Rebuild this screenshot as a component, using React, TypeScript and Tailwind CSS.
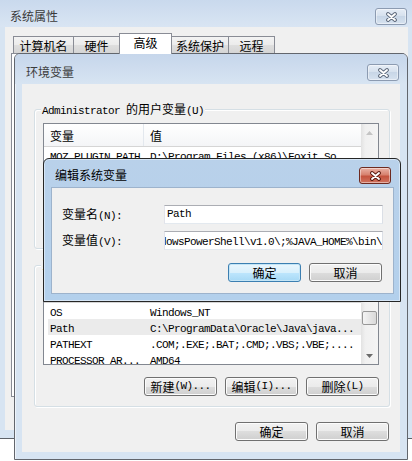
import React from "react";

const cjk = "font-['Noto_Sans_CJK_SC','Noto_Sans',sans-serif]";
const mono =
  "font-['Liberation_Mono','Noto_Sans_CJK_SC',monospace] text-[11px] tracking-[-0.6px]";

// latin run in the dialog's fixed-width font
const M = ({ children }: { children: React.ReactNode }) => (
  <span className={mono}>{children}</span>
);

const CloseBtn = ({ active }: { active?: boolean }) => (
  <div
    className={`flex h-[17px] w-[32px] shrink-0 items-center justify-center rounded-[3px] border shadow-[inset_0_0_0_1px_rgba(255,255,255,0.45)] ${
      active
        ? "border-[#6e2a20] bg-[linear-gradient(#eab2a6,#d7826f_45%,#c4533e_55%,#d0735f)]"
        : "border-[#8c9bb1] bg-[linear-gradient(#e6edf6,#d5e0ed_50%,#c8d6e7_50%,#d6e2ef)]"
    }`}
  >
    <svg width="13" height="10" viewBox="0 0 13 10">
      <path
        d="M3 2 L10 8 M10 2 L3 8"
        stroke={active ? "#5a1a10" : "#5f6b7d"}
        strokeWidth="3.8"
        strokeLinecap="round"
        fill="none"
      />
      <path d="M3 2 L10 8 M10 2 L3 8" stroke="#fff" strokeWidth="1.9" strokeLinecap="round" fill="none" />
    </svg>
  </div>
);

const Btn = ({ children, primary }: { children: React.ReactNode; primary?: boolean }) => (
  <div
    className={`flex h-[19px] w-[73px] shrink-0 items-center justify-center rounded-[3px] border leading-none text-black ${
      primary
        ? "border-[#3c7fb1] bg-[linear-gradient(#eaf6fd,#d9f0fc_50%,#bee6fd_50%,#a7d9f5)] shadow-[inset_0_0_0_1px_#c4e5f6]"
        : "border-[#707070] bg-[linear-gradient(#f2f2f2,#ebebeb_50%,#dddddd_50%,#cfcfcf)] shadow-[inset_0_0_0_1px_#fcfcfc]"
    }`}
  >
    {children}
  </div>
);

const Arrow = ({ up, disabled }: { up?: boolean; disabled?: boolean }) => (
  <div className="flex h-[17px] shrink-0 items-center justify-center">
    <svg width="7" height="4" viewBox="0 0 7 4">
      <path d={up ? "M0 4 L3.5 0 L7 4Z" : "M0 0 L7 0 L3.5 4Z"} fill={disabled ? "#c4c4c4" : "#6a6a6a"} />
    </svg>
  </div>
);

type Row = [string, string];

const ListView = ({ rows, selected, scroll }: { rows: Row[]; selected?: number; scroll?: boolean }) => (
  <div className="flex h-[86px] w-[336px] shrink-0 overflow-hidden border border-[#828790] bg-white">
    <div className="flex w-[317px] flex-col overflow-hidden">
      <div className="flex h-[23px] shrink-0 items-center border-b border-[#d5d5d5] bg-[linear-gradient(#ffffff,#f4f5f7)]">
        <div className="flex h-full w-[100px] items-center border-r border-[#e3e8ee] pl-[6px] pt-[2px]">变量</div>
        <div className="pl-[6px] pt-[2px]">值</div>
      </div>
      {rows.map(([name, value], i) => (
        <div
          key={name}
          className={`ml-[4px] flex h-[16px] shrink-0 items-center whitespace-nowrap pt-[1px] ${
            i === selected ? "bg-[#ebebeb]" : ""
          }`}
        >
          <div className="w-[95px] shrink-0 overflow-hidden pl-[2px]">
            <M>{name}</M>
          </div>
          <div className="pl-[7px]">
            <M>{value}</M>
          </div>
        </div>
      ))}
    </div>
    <div className="flex w-[17px] shrink-0 flex-col bg-[linear-gradient(90deg,#e2e2e2,#f0f0f0_25%,#f4f4f4)]">
      <Arrow up disabled={!scroll} />
      <div className="flex-1">
        {scroll && (
          <div className="ml-px mt-[14px] h-[14px] w-[15px] rounded-[2px] border border-[#979797] bg-[linear-gradient(90deg,#f4f4f4,#e6e6e6_50%,#d9d9d9)]" />
        )}
      </div>
      <Arrow disabled={!scroll} />
    </div>
  </div>
);

const GroupBox = ({
  label,
  className,
  children,
}: {
  label: React.ReactNode;
  className: string;
  children: React.ReactNode;
}) => (
  <div
    className={`relative w-[356px] shrink-0 rounded-[3px] border border-[#d5dfe5] shadow-[inset_1px_1px_0_#fff,1px_1px_0_#fff] ${className}`}
  >
    <span className="absolute left-[6px] top-[-8px] bg-[#f0f0f0] px-px leading-[14px]">{label}</span>
    <div className="ml-[8px] mt-[13px] flex flex-col">{children}</div>
  </div>
);

const ListButtons = () => (
  <div className="mt-[12px] flex w-[336px] justify-end gap-[8px]">
    <Btn>
      新建<M>(W)...</M>
    </Btn>
    <Btn>
      编辑<M>(I)...</M>
    </Btn>
    <Btn>
      删除<M>(L)</M>
    </Btn>
  </div>
);

const userVars: Row[] = [
  ["MOZ_PLUGIN_PATH", "D:\\Program Files (x86)\\Foxit So..."],
  ["TEMP", "%USERPROFILE%\\AppData\\Local\\Temp"],
  ["TMP", "%USERPROFILE%\\AppData\\Local\\Temp"],
];

const sysVars: Row[] = [
  ["OS", "Windows_NT"],
  ["Path", "C:\\ProgramData\\Oracle\\Java\\java..."],
  ["PATHEXT", ".COM;.EXE;.BAT;.CMD;.VBS;.VBE;...."],
  ["PROCESSOR_AR...", "AMD64"],
];

const tabs = [
  { label: "计算机名", w: "w-[61px]" },
  { label: "硬件", w: "w-[47px]" },
  { label: "高级", w: "w-[53px]", active: true },
  { label: "系统保护", w: "w-[58px]" },
  { label: "远程", w: "w-[47px]" },
];

const inputBox =
  "flex h-[19px] w-[219px] items-center overflow-hidden whitespace-nowrap border border-[#abadb3] border-b-[#e3e9ef] border-l-[#e2e3ea] border-r-[#dbdfe6] bg-white";

export default function App() {
  return (
    <div className={`relative h-[461px] w-[412px] overflow-hidden bg-white text-[12px] text-black ${cjk}`}>
      {/* 系统属性 */}
      <div className="absolute left-[-1px] top-[-1px] flex h-[440px] w-[420px] flex-col border border-[#5d6168] bg-[#d7e4f2]">
        <div className="flex h-[27px] shrink-0 items-start justify-between bg-[linear-gradient(#c9d9ed,#d9e5f3)] pl-[10px] pr-[11px] pt-[8px]">
          <span className="leading-[16px] text-[#3a3a3a]">系统属性</span>
          <CloseBtn />
        </div>
        <div className="ml-[5px] flex h-[403px] w-[403px] flex-col bg-[#f0f0f0] pl-[6px] pt-[6px]">
          <div className="flex h-[21px] items-end pl-[2px]">
            {tabs.map((t, i) => (
              <div
                key={t.label}
                className={`flex items-center justify-center border border-b-0 border-[#898c95] ${t.w} ${
                  i > 0 ? "-ml-px" : ""
                } ${
                  t.active
                    ? "relative z-10 h-[21px] bg-white pb-[2px]"
                    : "h-[18px] bg-[linear-gradient(#f3f3f3,#ebebeb_50%,#dedede_50%,#d4d4d4)] pt-px"
                }`}
              >
                {t.label}
              </div>
            ))}
          </div>
          <div className="-mt-px h-[344px] w-[393px] border border-[#898c95] bg-white" />
        </div>
      </div>

      {/* 环境变量 */}
      <div className="absolute left-[14px] top-[53px] flex h-[407px] w-[394px] flex-col rounded-t-[6px] border border-[#62666d] bg-[#d7e4f2] shadow-[inset_1px_1px_0_rgba(255,255,255,0.6)]">
        <div className="flex h-[30px] shrink-0 items-start justify-between rounded-t-[5px] bg-[linear-gradient(#c6d6eb,#d7e4f2)] pl-[11px] pr-[8px] pt-[10px]">
          <span className="leading-[16px] text-[#3c3c3c]">环境变量</span>
          <CloseBtn />
        </div>
        <div className="ml-[7px] flex h-[368px] w-[378px] flex-col bg-[#f0f0f0] pl-[12px] pt-[25px]">
          <GroupBox
            className="h-[140px]"
            label={
              <>
                <M>Administrator </M>的用户变量<M>(U)</M>
              </>
            }
          >
            <ListView rows={userVars} />
            <ListButtons />
          </GroupBox>
          <GroupBox
            className="mt-[16px] h-[142px]"
            label={
              <>
                系统变量<M>(S)</M>
              </>
            }
          >
            <ListView rows={sysVars} selected={1} scroll />
            <ListButtons />
          </GroupBox>
          <div className="mt-[15px] flex w-[355px] justify-end gap-[8px]">
            <Btn>确定</Btn>
            <Btn>取消</Btn>
          </div>
        </div>
      </div>

      {/* 编辑系统变量 */}
      <div className="absolute left-[43px] top-[158px] flex h-[144px] w-[358px] flex-col rounded-t-[6px] border border-[#262626] bg-[linear-gradient(#b9d1ea,#b3d0ec)] shadow-[inset_0_0_0_1px_#d6e6f6]">
        <div className="flex h-[28px] shrink-0 items-start justify-between rounded-t-[5px] pl-[11px] pr-[9px] pt-[8px]">
          <span className="leading-[16px] text-black">编辑系统变量</span>
          <CloseBtn active />
        </div>
        <div className="ml-[7px] flex h-[107px] w-[343px] flex-col border border-[#9db3cc] bg-[#f0f0f0] pl-[10px] pt-[17px]">
          <div className="flex h-[19px] items-center">
            <span className="w-[102px] shrink-0">
              变量名<M>(N):</M>
            </span>
            <div className={`${inputBox} pl-[2px]`}>
              <M>Path</M>
            </div>
          </div>
          <div className="mt-[7px] flex h-[19px] items-center">
            <span className="w-[102px] shrink-0">
              变量值<M>(V):</M>
            </span>
            <div className={`${inputBox} justify-end`}>
              <span className="shrink-0">
                <M>%SystemRoot%\system32\WindowsPowerShell\v1.0\;%JAVA_HOME%\bin\</M>
              </span>
            </div>
          </div>
          <div className="mt-[13px] flex w-[320px] justify-end gap-[8px]">
            <Btn primary>确定</Btn>
            <Btn>取消</Btn>
          </div>
        </div>
      </div>
    </div>
  );
}
